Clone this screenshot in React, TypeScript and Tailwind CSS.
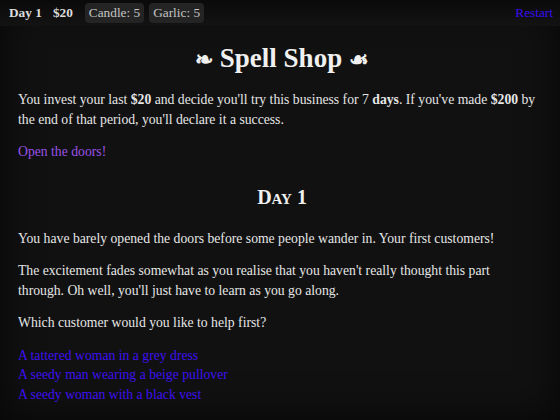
import React from "react";

export default function App() {
  const serif = { fontFamily: '"Liberation Serif", "DejaVu Serif", serif' };
  return (
    <div
      className="w-[560px] h-[420px] bg-[#111111] text-[#e6e6e6] overflow-hidden flex flex-col shadow-[inset_0_0_40px_rgba(0,0,0,0.7)]"
      style={serif}
    >
      <div className="h-[26px] shrink-0 flex items-center pl-[9px] pr-[7px] bg-gradient-to-b from-[#0a0a0a] to-[#131313] text-[13.3px] text-[#dcdcdc]">
        <span className="font-bold">Day 1</span>
        <span className="font-bold ml-[11px]">$20</span>
        <span className="ml-[12px] px-[4px] h-[20px] flex items-center rounded-[4px] bg-[#242424] text-[#c4c4c4]">Candle: 5</span>
        <span className="ml-[5px] px-[4px] h-[20px] flex items-center rounded-[4px] bg-[#242424] text-[#c4c4c4]">Garlic: 5</span>
        <span className="ml-auto text-[#3b0df2]">Restart</span>
      </div>
      <div className="pl-[18px] pr-[14px] text-[13.7px] leading-[19.5px]">
        <h1 className="text-center font-bold text-[27px] leading-[34px] h-[34px] mt-[15px] text-[#f0f0f0]">
          <span className="text-[22px] leading-none">❧</span> Spell Shop <span className="text-[22px] leading-none">☙</span>
        </h1>
        <p className="mt-[15px]">
          You invest your last <b>$20</b> and decide you'll try this business for 7 <b>days</b>. If you've made <b>$200</b> by the end of that period, you'll declare it a success.
        </p>
        <p className="mt-[13px] text-[#9a52e6]">Open the doors!</p>
        <h2 className="text-center font-bold text-[20px] leading-[24px] mt-[23px] text-[#f0f0f0]">
          D<span className="text-[15px]">AY</span> 1
        </h2>
        <p className="mt-[18px]">
          You have barely opened the doors before some people wander in. Your first customers!
        </p>
        <p className="mt-[13px]">
          The excitement fades somewhat as you realise that you haven't really thought this part
          <br />
          through. Oh well, you'll just have to learn as you go along.
        </p>
        <p className="mt-[13px]">Which customer would you like to help first?</p>
        <div className="mt-[13px] flex flex-col text-[#3f10f2]">
          <span>A tattered woman in a grey dress</span>
          <span>A seedy man wearing a beige pullover</span>
          <span>A seedy woman with a black vest</span>
        </div>
      </div>
    </div>
  );
}
